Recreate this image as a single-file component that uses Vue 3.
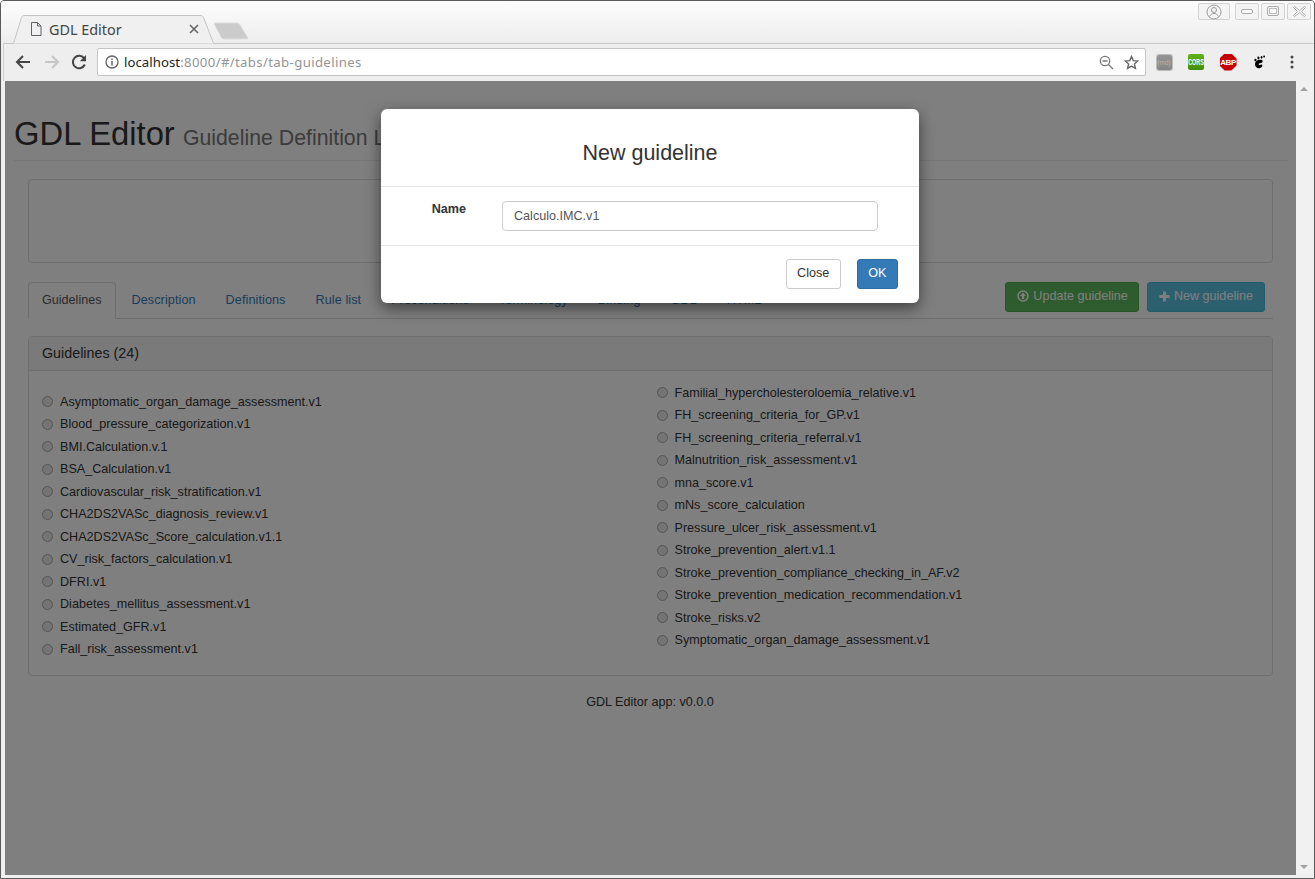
<template>
  <div class="window">
    <div class="tabstrip">
      <div class="tab">
        <svg class="tab-shape" width="208" height="29" viewBox="0 0 208 29">
          <path d="M0 28.500h1c1 0 1.600-.6 2-1.500L10.500 2.500c.5-1.300 1.300-2 2.500-2h177c1.200 0 2 .7 2.500 2l9.500 24.500c.4.900 1 1.500 2 1.500h3" fill="#f0f0f0" stroke="#c4c4c4" />
        </svg>
        <svg class="tab-doc" width="12" height="14" viewBox="0 0 12 14">
          <path d="M1.500 .5h6l3.500 3.500v9.500h-9.500zM7.500 .5v3.500h3.500" fill="none" stroke="#5f6368" />
        </svg>
        <span class="tab-title">GDL Editor</span>
        <svg class="tab-close" width="10" height="10" viewBox="0 0 10 10">
          <path d="M1 1l8 8M9 1l-8 8" stroke="#666" stroke-width="1.600" />
        </svg>
      </div>
      <svg class="new-tab" width="35" height="18" viewBox="0 0 35 18">
        <path d="M1.500 1h22c1 0 1.500.4 2 1.200l8 13c.6 1 .2 1.800-1 1.800h-23c-1 0-1.500-.4-2-1.200l-7-13C.2 1.800.4 1 1.500 1z" fill="#cbcbcb" stroke="#dedede" />
      </svg>
      <div class="win-controls">
        <div class="win-btn profile">
          <svg width="16" height="16" viewBox="0 0 16 16">
            <circle cx="8" cy="8" r="7" fill="none" stroke="#9a9a9a" />
            <circle cx="8" cy="6" r="2.500" fill="none" stroke="#9a9a9a" />
            <path d="M3.500 12.500c1-2 2.500-3 4.500-3s3.500 1 4.500 3" fill="none" stroke="#9a9a9a" />
          </svg>
        </div>
        <div class="win-btn minimize">
          <svg width="13" height="6" viewBox="0 0 13 6"><rect x=".5" y=".5" width="11" height="4" rx="1.500" fill="#fff" stroke="#aaa" /></svg>
        </div>
        <div class="win-btn maximize">
          <svg width="13" height="11" viewBox="0 0 13 11"><rect x=".5" y=".5" width="11" height="9" rx="1.500" fill="none" stroke="#aaa" stroke-width="1" /><rect x="2.500" y="2.500" width="7" height="5" fill="#fff" stroke="#bbb" /></svg>
        </div>
        <div class="win-btn closer">
          <svg width="13" height="11" viewBox="0 0 13 11"><path d="M1.500 .5l5 4 5-4 1 1-4 4 4 4-1 1-5-4-5 4-1-1 4-4-4-4z" fill="#fff" stroke="#aaa" /></svg>
        </div>
      </div>
    </div>

    <div class="toolbar">
      <svg class="nav-icon" width="16" height="16" viewBox="0 0 16 16">
        <path d="M15 8H2.500M8 2L2 8l6 6" fill="none" stroke="#444" stroke-width="2" />
      </svg>
      <svg class="nav-icon" width="16" height="16" viewBox="0 0 16 16">
        <path d="M1 8h12.500M8 2l6 6-6 6" fill="none" stroke="#c6c6c6" stroke-width="2" />
      </svg>
      <svg class="nav-icon reload" width="16" height="16" viewBox="0 0 16 16">
        <path d="M13.800 10.500A6.200 6.200 0 1 1 13 4.200" fill="none" stroke="#444" stroke-width="2" />
        <path d="M15 1v6.200H8.800z" fill="#444" />
      </svg>
      <div class="omnibox">
        <svg class="info" width="14" height="14" viewBox="0 0 14 14">
          <circle cx="7" cy="7" r="6" fill="none" stroke="#5f6368" stroke-width="1.300" />
          <path d="M7 6v4.500M7 3.400v1.500" stroke="#5f6368" stroke-width="1.500" />
        </svg>
        <span class="url"><span class="host">localhost</span>:8000/#/tabs/tab-guidelines</span>
        <svg class="zoom-out" width="15" height="15" viewBox="0 0 15 15">
          <circle cx="6" cy="6" r="4.700" fill="none" stroke="#777" stroke-width="1.300" />
          <path d="M3.500 6h5M9.500 9.500l4.500 4.500" stroke="#777" stroke-width="1.300" />
        </svg>
        <svg class="star" width="15" height="15" viewBox="0 0 15 15">
          <path d="M7.500 1.500l1.800 4.100 4.500.4-3.400 3 1 4.400-3.900-2.300-3.900 2.300 1-4.400-3.400-3 4.500-.4z" fill="none" stroke="#666" stroke-width="1.400" />
        </svg>
      </div>
      <div class="extensions">
        <div class="ext"><span class="ext-md">(md)</span></div>
        <div class="ext"><span class="ext-cors"><span class="ext-cors-text">CORS</span></span></div>
        <div class="ext">
          <span class="ext-abp">ABP</span>
        </div>
        <div class="ext">
          <svg width="14" height="14" viewBox="0 0 16 16">
            <path d="M9.500 5.500c-4-.8-7 1.500-7.200 4.800-.2 3.200 2.400 5.200 5.200 4.700 1.800-.3 3-1.300 3.200-2.600.1-1-.8-1.700-2-1.300-.8.300-1.500.5-2 0-.6-.7 0-1.600 1.200-1.800 1.600-.3 2.700-.6 3.100-1.700.3-1-.3-1.800-1.500-2.100z" fill="#000" />
            <ellipse cx="2.800" cy="5.800" rx="1.300" ry="1.600" fill="#000" />
            <ellipse cx="6.200" cy="3.400" rx="1.200" ry="1.700" fill="#000" />
            <ellipse cx="9.800" cy="2.700" rx="1" ry="1.500" fill="#000" />
            <ellipse cx="12.700" cy="1.800" rx="1" ry="1.200" fill="#000" />
          </svg>
        </div>
        <div class="ext">
          <svg width="4" height="14" viewBox="0 0 4 14">
            <circle cx="2" cy="2" r="1.500" fill="#444" />
            <circle cx="2" cy="7" r="1.500" fill="#444" />
            <circle cx="2" cy="12" r="1.500" fill="#444" />
          </svg>
        </div>
      </div>
    </div>

    <div class="content">
      <div class="viewport">
        <div class="page">
          <h1 class="page-title">GDL Editor <small>Guideline Definition Language Editor</small></h1>
          <div class="intro-panel"></div>

          <div class="tabs-row">
            <ul class="nav-tabs">
              <li v-for="(t, i) in tabs" :key="t" :class="{ active: i === 0 }">{{ t }}</li>
            </ul>
            <div class="actions">
              <span class="btn btn-success">
                <svg width="12" height="12" viewBox="0 0 14 14">
                  <circle cx="7" cy="7" r="5.800" fill="none" stroke="#fff" stroke-width="1.800" />
                  <path d="M7 3L10.400 7H8.300v3.600H5.700V7H3.600z" fill="#fff" />
                </svg>
                Update guideline
              </span>
              <span class="btn btn-info">
                <svg width="11" height="11" viewBox="0 0 13 13">
                  <path d="M4.800 .5h3.400v4.300h4.300v3.400H8.200v4.300H4.800V8.200H.5V4.800h4.300z" fill="#fff" />
                </svg>
                New guideline
              </span>
            </div>
          </div>

          <div class="panel">
            <div class="panel-heading">Guidelines ({{ left.length + right.length }})</div>
            <div class="panel-body">
              <ul class="guide-list left-list">
                <li v-for="g in left" :key="g"><i class="dot"></i>{{ g }}</li>
              </ul>
              <ul class="guide-list right-list">
                <li v-for="g in right" :key="g"><i class="dot"></i>{{ g }}</li>
              </ul>
            </div>
          </div>

          <div class="footer">GDL Editor app: v0.0.0</div>
        </div>

        <div class="backdrop"></div>
        <div class="modal-wrap">
          <div class="modal">
            <div class="modal-header">New guideline</div>
            <div class="modal-body">
              <label class="field-label">Name</label>
              <input class="field-input" type="text" value="Calculo.IMC.v1" />
            </div>
            <div class="modal-footer">
              <button class="mbtn mbtn-default">Close</button>
              <button class="mbtn mbtn-primary">OK</button>
            </div>
          </div>
        </div>
      </div>
      <div class="scrollbar">
        <span class="arrow-up"></span>
        <span class="arrow-down"></span>
      </div>
    </div>
  </div>
</template>

<script setup>
const tabs = [
  'Guidelines',
  'Description',
  'Definitions',
  'Rule list',
  'Preconditions',
  'Terminology',
  'Binding',
  'GDL',
  'HTML'
]

const left = [
  'Asymptomatic_organ_damage_assessment.v1',
  'Blood_pressure_categorization.v1',
  'BMI.Calculation.v.1',
  'BSA_Calculation.v1',
  'Cardiovascular_risk_stratification.v1',
  'CHA2DS2VASc_diagnosis_review.v1',
  'CHA2DS2VASc_Score_calculation.v1.1',
  'CV_risk_factors_calculation.v1',
  'DFRI.v1',
  'Diabetes_mellitus_assessment.v1',
  'Estimated_GFR.v1',
  'Fall_risk_assessment.v1'
]

const right = [
  'Familial_hypercholesteroloemia_relative.v1',
  'FH_screening_criteria_for_GP.v1',
  'FH_screening_criteria_referral.v1',
  'Malnutrition_risk_assessment.v1',
  'mna_score.v1',
  'mNs_score_calculation',
  'Pressure_ulcer_risk_assessment.v1',
  'Stroke_prevention_alert.v1.1',
  'Stroke_prevention_compliance_checking_in_AF.v2',
  'Stroke_prevention_medication_recommendation.v1',
  'Stroke_risks.v2',
  'Symptomatic_organ_damage_assessment.v1'
]
</script>

<style>
html,
body {
  margin: 0;
  overflow: hidden;
  background: #fff;
}
</style>

<style scoped>
.window {
  width: 1315px;
  height: 879px;
  box-sizing: border-box;
  display: flex;
  flex-direction: column;
  border: 1px solid #5a5a5a;
  border-radius: 4px 4px 0 0;
  background: #f0f0f0;
  overflow: hidden;
  font-family: "Liberation Sans", Arial, sans-serif;
}

.tabstrip {
  height: 42px;
  flex: none;
  position: relative;
  z-index: 1;
  display: flex;
  align-items: flex-end;
  padding-left: 10px;
  background: linear-gradient(#fdfdfd, #ededed);
}

.tab {
  width: 204px;
  height: 28px;
  position: relative;
  display: flex;
  align-items: center;
  padding-left: 19px;
  box-sizing: border-box;
}

.tab-shape {
  position: absolute;
  left: 0;
  top: 0;
}

.tab-doc,
.tab-title,
.tab-close {
  position: relative;
}

.tab-title {
  margin-left: 7px;
  width: 140px;
  font-family: "Noto Sans", sans-serif;
  font-size: 14.400px;
  color: #444;
}

.new-tab {
  margin: 0 0 3px -1px;
}

.win-controls {
  position: absolute;
  right: 3px;
  top: 2px;
  display: flex;
}

.win-btn {
  height: 17px;
  box-sizing: border-box;
  display: flex;
  align-items: center;
  justify-content: center;
  border: 1px solid #d2d2d2;
  border-radius: 2px;
  background: #f4f4f4;
  margin-left: 2px;
}

.profile {
  width: 32px;
  margin-right: 3px;
}

.minimize {
  width: 24px;
}

.maximize {
  width: 24px;
}

.closer {
  width: 24px;
}

.toolbar {
  height: 38px;
  flex: none;
  box-sizing: border-box;
  display: flex;
  align-items: center;
  margin-left: 2px;
  padding: 0 0 1px 11px;
  background: #eeeeee;
  border-top: 1px solid #c8c8c8;
  border-left: 1px solid #cfcfcf;
}

.nav-icon {
  flex: none;
  margin-right: 13px;
}

.reload {
  margin-left: -2px;
  margin-right: 10px;
}

.omnibox {
  width: 1049px;
  height: 28px;
  box-sizing: border-box;
  display: flex;
  align-items: center;
  padding: 0 6px 0 7px;
  background: #fff;
  border: 1px solid #c4c4c4;
  border-radius: 2px;
}

.info {
  flex: none;
}

.url {
  flex: 1;
  margin-left: 5px;
  font-family: "Noto Sans", sans-serif;
  font-size: 13.200px;
  letter-spacing: 0.350px;
  color: #959595;
}

.host {
  color: #222;
  letter-spacing: 0.050px;
}

.zoom-out {
  margin-right: 10px;
}

.extensions {
  display: flex;
  margin-left: 2px;
}

.ext {
  width: 32px;
  height: 20px;
  display: flex;
  align-items: center;
  justify-content: center;
}

.ext-md {
  width: 15px;
  height: 15px;
  display: block;
  background: linear-gradient(#949494, #858585);
  box-shadow: 0 0 0 1px #bdbdbd;
  border-radius: 2px;
  font-size: 6.500px;
  line-height: 15px;
  text-align: center;
  color: #b5b5b5;
  white-space: nowrap;
}

.ext-cors {
  width: 16px;
  height: 16px;
  display: flex;
  align-items: center;
  justify-content: center;
  background: linear-gradient(#62b312, #3f8f06);
  border-radius: 2px;
}

.ext-cors-text {
  font-size: 9px;
  font-weight: 700;
  color: #fff;
  white-space: nowrap;
  transform: scaleX(0.6);
}

.ext-abp {
  width: 17px;
  height: 17px;
  display: block;
  background: #c40000;
  clip-path: polygon(30% 0, 70% 0, 100% 30%, 100% 70%, 70% 100%, 30% 100%, 0 70%, 0 30%);
  font-size: 8px;
  font-weight: 700;
  line-height: 17px;
  text-align: center;
  color: #fff;
  letter-spacing: -0.400px;
  white-space: nowrap;
}

.content {
  flex: 1;
  min-height: 0;
  display: flex;
  margin: 0 2px 3px 4px;
}

.viewport {
  width: 1291px;
  position: relative;
  overflow: hidden;
  background: #fff;
}

.page {
  height: 100%;
  box-sizing: border-box;
  padding: 35px 8px 0 9px;
  font-size: 12.600px;
  line-height: 20px;
  color: #333;
}

.page-title {
  margin: 0;
  padding-bottom: 8px;
  font-size: 32.760px;
  font-weight: 400;
  line-height: 36px;
  color: #333;
  border-bottom: 1px solid #eee;
}

.page-title small {
  margin-left: -1px;
  font-size: 21.300px;
  line-height: 1;
  color: #777;
}

.intro-panel {
  height: 84px;
  box-sizing: border-box;
  margin: 18px 15px 19px 14px;
  border: 1px solid #ddd;
  border-radius: 4px;
}

.tabs-row {
  margin: 0 15px 17px 14px;
  display: flex;
  justify-content: space-between;
  align-items: flex-start;
  border-bottom: 1px solid #ddd;
  height: 37px;
  box-sizing: border-box;
}

.nav-tabs {
  list-style: none;
  margin: 0;
  padding: 0;
  display: flex;
  gap: 2px;
  letter-spacing: 0.100px;
}

.nav-tabs li {
  height: 36px;
  box-sizing: border-box;
  padding: 7px 13px;
  border: 1px solid transparent;
  color: #337ab7;
}

.nav-tabs li.active {
  background: #fff;
  color: #555;
  border-color: #ddd #ddd #fff;
  border-radius: 4px 4px 0 0;
  height: 37px;
  letter-spacing: 0;
}

.actions {
  display: flex;
  gap: 8px;
  padding-right: 8px;
}

.btn {
  height: 30px;
  box-sizing: border-box;
  display: flex;
  align-items: center;
  gap: 4px;
  padding: 0 11px 2px;
  border: 1px solid transparent;
  border-radius: 3px;
  color: #fff;
}

.btn-success {
  padding-right: 10px;
  background: #5cb85c;
  border-color: #4cae4c;
}

.btn-info {
  background: #5bc0de;
  border-color: #46b8da;
}

.panel {
  height: 340px;
  box-sizing: border-box;
  margin: 0 15px 0 14px;
  border: 1px solid #ddd;
  border-radius: 4px;
}

.panel-heading {
  height: 34px;
  box-sizing: border-box;
  padding: 6px 13px;
  font-size: 14.300px;
  color: #333;
  background: #f5f5f5;
  border-bottom: 1px solid #ddd;
  border-radius: 3px 3px 0 0;
}

.panel-body {
  display: grid;
  grid-template-columns: 615px 1fr;
  padding: 10.400px 13px 0;
}

.guide-list {
  list-style: none;
  margin: 0;
  padding: 0;
}

.left-list {
  padding-top: 9px;
}

.guide-list li {
  height: 22.500px;
  display: flex;
  align-items: center;
  color: #333;
}

.dot {
  width: 11px;
  height: 11px;
  flex: none;
  margin: 0 7px 0 -0.500px;
  border: 1px solid #aaa;
  box-sizing: border-box;
  border-radius: 50%;
  background: #e8e8e8;
}

.left-list .dot {
  margin-right: 7.500px;
}

.footer {
  margin-top: 16px;
  padding-right: 2px;
  text-align: center;
}

.backdrop {
  position: absolute;
  inset: 0;
  background: rgba(0, 0, 0, 0.5);
}

.modal-wrap {
  position: absolute;
  inset: 0;
  display: flex;
  justify-content: center;
  align-items: flex-start;
  padding: 28px 1px 0 0;
}

.modal {
  width: 538px;
  height: 194px;
  box-sizing: border-box;
  background: #fff;
  border-radius: 6px;
  box-shadow: 0 5px 15px rgba(0, 0, 0, 0.5);
  color: #333;
}

.modal-header {
  height: 78px;
  box-sizing: border-box;
  padding-top: 30px;
  text-align: center;
  font-size: 21.500px;
  line-height: 28px;
  border-bottom: 1px solid #e5e5e5;
}

.modal-body {
  height: 59px;
  box-sizing: border-box;
  display: flex;
  align-items: flex-start;
  padding-top: 14px;
  border-bottom: 1px solid #e5e5e5;
}

.field-label {
  width: 85px;
  margin-right: 36px;
  text-align: right;
  font-size: 12.600px;
  font-weight: 700;
  line-height: 16px;
}

.field-input {
  width: 376px;
  height: 30px;
  box-sizing: border-box;
  padding: 0 11px;
  font-family: inherit;
  font-size: 12.600px;
  color: #555;
  border: 1px solid #ccc;
  border-radius: 4px;
  outline: none;
}

.modal-footer {
  display: flex;
  justify-content: flex-end;
  gap: 16px;
  padding: 13px 21px 0 0;
}

.mbtn {
  height: 30px;
  box-sizing: border-box;
  padding: 0 10.500px 2px;
  font-family: inherit;
  font-size: 12.600px;
  border: 1px solid #ccc;
  border-radius: 3px;
}

.mbtn-default {
  background: #fff;
  color: #333;
}

.mbtn-primary {
  background: #337ab7;
  border-color: #2e6da4;
  color: #fff;
}

.scrollbar {
  width: 16px;
  position: relative;
  background: #f1f1f1;
}

.arrow-up,
.arrow-down {
  position: absolute;
  left: 4px;
  width: 0;
  height: 0;
  border-left: 4px solid transparent;
  border-right: 4px solid transparent;
}

.arrow-up {
  top: 6px;
  border-bottom: 4px solid #a3a3a3;
}

.arrow-down {
  bottom: 6px;
  border-top: 4px solid #a3a3a3;
}
</style>
